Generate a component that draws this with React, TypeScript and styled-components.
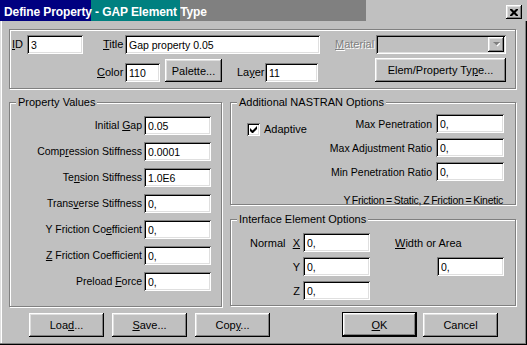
import React from 'react';
import styled, { createGlobalStyle, css } from 'styled-components';

const FONT = '"Liberation Sans", Arial, sans-serif';

const Global = createGlobalStyle`
  html, body { margin: 0; padding: 0; background: #c0c0c0; }
  body { font-family: ${FONT}; font-size: 10.5px; color: #000; }
  * { box-sizing: border-box; }
`;

const raised = css`
  box-shadow: inset -1px -1px 0 #000, inset 1px 1px 0 #fff, inset -2px -2px 0 #808080, inset 2px 2px 0 #dfdfdf;
`;
const sunken = css`
  box-shadow: inset 1px 1px 0 #808080, inset -1px -1px 0 #fff, inset 2px 2px 0 #000, inset -2px -2px 0 #dfdfdf;
`;

const Window = styled.div`
  width: 527px;
  height: 345px;
  background: #c0c0c0;
  display: flex;
  flex-direction: column;
  overflow: hidden;
  box-shadow: inset -1px -1px 0 #000, inset -2px -2px 0 #808080, inset 1px 0 0 #dfdfdf, inset 2px 0 0 #fff;
`;

const TitleBar = styled.div`
  height: 21px;
  flex: none;
  display: flex;
  align-items: flex-start;
  justify-content: space-between;
  background: linear-gradient(to right, #000080 0 91px, #008080 91px 180px, #808080 180px 366px, #c0c0c0 366px);
`;

const TitleText = styled.span`
  margin: 5px 0 0 4px;
  font-weight: bold;
  color: #fff;
  font-size: 12px;
  line-height: 14px;
  letter-spacing: -0.1px;
  white-space: nowrap;
`;

const CloseButton = styled.button`
  width: 16px;
  height: 14px;
  margin: 5px 5px 0 0;
  padding: 0;
  border: none;
  background: #c0c0c0;
  display: flex;
  align-items: center;
  justify-content: center;
  ${raised}
`;

const Body = styled.div`
  flex: 1;
  display: flex;
  flex-direction: column;
  padding: 8px 11px 0 9px;
`;

const Group = styled.div<{ $h: number; $mt?: number }>`
  position: relative;
  height: ${p => p.$h}px;
  margin-top: ${p => p.$mt ?? 0}px;
  border: 1px solid #808080;
  box-shadow: inset 1px 1px 0 #fff, 1px 1px 0 #fff;
`;

const Legend = styled.span`
  position: absolute;
  top: -7px;
  left: 6px;
  padding: 0 2px;
  background: #c0c0c0;
  font-size: 11px;
  line-height: 13px;
  white-space: nowrap;
`;

const TopGroup = styled(Group)`
  padding-top: 5px;
`;

const TopRow = styled.div<{ $h: number; $mt?: number }>`
  display: flex;
  align-items: flex-end;
  height: ${p => p.$h}px;
  margin-top: ${p => p.$mt ?? 0}px;
`;

const TopLabel = styled.label<{ $w: number; $ml: number; $disabled?: boolean }>`
  flex: none;
  width: ${p => p.$w}px;
  margin-left: ${p => p.$ml}px;
  height: 19px;
  line-height: 19px;
  font-size: 11px;
  white-space: nowrap;
  ${p => p.$disabled && css`
    color: #808080;
    text-shadow: 1px 1px 0 #fff;
  `}
`;

const TextField = styled.input<{ $w: number }>`
  flex: none;
  width: ${p => p.$w}px;
  height: 19px;
  margin: 0;
  padding: 0 2px 0 4px;
  border: none;
  outline: none;
  background: #fff;
  font: 10.5px ${FONT};
  color: #000;
  ${sunken}
`;

const Combo = styled.div<{ $w: number }>`
  flex: none;
  width: ${p => p.$w}px;
  height: 19px;
  padding: 2px;
  display: flex;
  justify-content: flex-end;
  background: #c0c0c0;
  ${sunken}
`;

const ComboArrow = styled.span`
  width: 16px;
  height: 15px;
  display: flex;
  align-items: center;
  justify-content: center;
  background: #c0c0c0;
  ${raised}
`;

const Button = styled.button<{ $w: number; $h?: number; $ml?: number; $default?: boolean }>`
  flex: none;
  width: ${p => p.$w}px;
  height: ${p => p.$h ?? 24}px;
  margin: 0 0 0 ${p => p.$ml ?? 0}px;
  padding: 0;
  border: none;
  background: #c0c0c0;
  font: 11px ${FONT};
  color: #000;
  white-space: nowrap;
  ${raised}
  ${p => p.$default && css`
    box-shadow: inset 0 0 0 1px #000, inset -2px -2px 0 #000, inset 2px 2px 0 #fff,
      inset -3px -3px 0 #808080, inset 3px 3px 0 #dfdfdf;
  `}
`;

const K = styled.span`
  text-decoration: underline;
`;

const Middle = styled.div`
  display: grid;
  grid-template-columns: 213px 1fr;
  column-gap: 8px;
  margin-top: 13px;
  align-items: start;
`;

const RightColumn = styled.div`
  display: flex;
  flex-direction: column;
`;

const FieldList = styled.div`
  display: flex;
  flex-direction: column;
  gap: 7px;
  padding-top: 13px;
`;

const FieldRow = styled.div`
  display: flex;
  align-items: center;
  height: 19px;
`;

const FieldLabel = styled.label<{ $w: number }>`
  flex: none;
  width: ${p => p.$w}px;
  padding-right: 2px;
  text-align: right;
  white-space: nowrap;
  line-height: 19px;
`;

const NastranBody = styled.div`
  display: flex;
  height: 100%;
`;

const CheckColumn = styled.div`
  padding: 20px 0 0 16px;
`;

const CheckLabel = styled.label`
  display: flex;
  align-items: center;
  gap: 4px;
  line-height: 13px;
  font-size: 11px;
`;

const CheckBox = styled.span`
  width: 13px;
  height: 13px;
  display: flex;
  align-items: center;
  justify-content: center;
  background: #fff;
  ${sunken}
`;

const NastranFields = styled.div`
  flex: 1;
  display: flex;
  flex-direction: column;
  gap: 5px;
  padding: 11px 11px 0 0;
`;

const NastranRow = styled.div`
  display: flex;
  justify-content: flex-end;
  align-items: center;
  height: 19px;
`;

const NastranLabel = styled.label`
  padding-right: 4px;
  white-space: nowrap;
`;

const Footnote = styled.div`
  margin-top: 8px;
  padding-right: 1px;
  text-align: right;
  line-height: 13px;
  letter-spacing: -0.25px;
  word-spacing: -0.8px;
  white-space: nowrap;
`;

const InterfaceGrid = styled.div`
  display: grid;
  grid-template-columns: 36px 17px 67px 25px 109px;
  grid-auto-rows: 19px;
  row-gap: 5px;
  padding: 13px 0 0 19px;
  align-items: center;
`;

const GridText = styled.span<{ $col: number; $row: number; $right?: boolean }>`
  grid-column: ${p => p.$col};
  grid-row: ${p => p.$row};
  text-align: ${p => (p.$right ? 'right' : 'left')};
  padding-right: ${p => (p.$right ? 3 : 0)}px;
  font-size: 11px;
  white-space: nowrap;
`;

const GridField = styled(TextField)<{ $col: number; $row: number; $end?: boolean }>`
  grid-column: ${p => p.$col};
  grid-row: ${p => p.$row};
  justify-self: ${p => (p.$end ? 'end' : 'start')};
`;

const ButtonRow = styled.div`
  display: flex;
  justify-content: space-between;
  align-items: flex-end;
  margin-top: 5px;
  height: 25px;
  padding: 0 18px 0 20px;
`;

const ButtonGroup = styled.div<{ $gap: number }>`
  display: flex;
  align-items: flex-end;
  gap: ${p => p.$gap}px;
`;

const propertyFields: { label: React.ReactNode; value: string }[] = [
  { label: <>Initial <K>G</K>ap</>, value: '0.05' },
  { label: <>Comp<K>r</K>ession Stiffness</>, value: '0.0001' },
  { label: <>Te<K>n</K>sion Stiffness</>, value: '1.0E6' },
  { label: <>Trans<K>v</K>erse Stiffness</>, value: '0,' },
  { label: <>Y Friction Co<K>e</K>fficient</>, value: '0,' },
  { label: <><K>Z</K> Friction Coefficient</>, value: '0,' },
  { label: <>Preload <K>F</K>orce</>, value: '0,' },
];

const nastranFields = [
  { label: 'Max Penetration', value: '0,' },
  { label: 'Max Adjustment Ratio', value: '0,' },
  { label: 'Min Penetration Ratio', value: '0,' },
];

export default function App() {
  return (
    <>
      <Global />
      <Window>
        <TitleBar>
          <TitleText>Define Property - GAP Element Type</TitleText>
          <CloseButton aria-label="Close">
            <svg width="8" height="7" viewBox="0 0 8 7">
              <path d="M0 0h2l2 2 2-2h2v1L5.5 3.5 8 6v1H6L4 5 2 7H0V6l2.5-2.5L0 1z" fill="#000" />
            </svg>
          </CloseButton>
        </TitleBar>
        <Body>
          <TopGroup $h={60}>
            <TopRow $h={19}>
              <TopLabel $w={15} $ml={2}><K>I</K>D</TopLabel>
              <TextField $w={56} value="3" readOnly />
              <TopLabel $w={22} $ml={20}><K>T</K>itle</TopLabel>
              <TextField $w={195} value="Gap property 0.05" readOnly />
              <TopLabel $w={41} $ml={15} $disabled><K>M</K>aterial</TopLabel>
              <Combo $w={130}>
                <ComboArrow>
                  <svg width="7" height="5" viewBox="0 0 7 5">
                    <path d="M1 1h7L4.5 4.5z" fill="#fff" />
                    <path d="M0 0h7L3.5 3.5z" fill="#808080" />
                  </svg>
                </ComboArrow>
              </Combo>
            </TopRow>
            <TopRow $h={25} $mt={3}>
              <TopLabel $w={28} $ml={87}><K>C</K>olor</TopLabel>
              <TextField $w={35} value="110" readOnly />
              <Button $w={57} $h={23} $ml={5}>Palette...</Button>
              <TopLabel $w={28} $ml={15}>La<K>y</K>er</TopLabel>
              <TextField $w={53} value="11" readOnly />
              <Button $w={131} $h={24} $ml={57}>Elem/Property Ty<K>p</K>e...</Button>
            </TopRow>
          </TopGroup>

          <Middle>
            <Group $h={205}>
              <Legend>Property Values</Legend>
              <FieldList>
                {propertyFields.map((f, i) => (
                  <FieldRow key={i}>
                    <FieldLabel $w={134}>{f.label}</FieldLabel>
                    <TextField $w={67} value={f.value} readOnly />
                  </FieldRow>
                ))}
              </FieldList>
            </Group>

            <RightColumn>
              <Group $h={103}>
                <Legend>Additional NASTRAN Options</Legend>
                <NastranBody>
                  <CheckColumn>
                    <CheckLabel>
                      <CheckBox>
                        <svg width="7" height="7" viewBox="0 0 7 7">
                          <path d="M0 2v3l2 2h1l4-4V0L2.5 4.5z" fill="#000" />
                        </svg>
                      </CheckBox>
                      Adaptive
                    </CheckLabel>
                  </CheckColumn>
                  <NastranFields>
                    {nastranFields.map(f => (
                      <NastranRow key={f.label}>
                        <NastranLabel>{f.label}</NastranLabel>
                        <TextField $w={68} value={f.value} readOnly />
                      </NastranRow>
                    ))}
                    <Footnote>Y Friction = Static, Z Friction = Kinetic</Footnote>
                  </NastranFields>
                </NastranBody>
              </Group>

              <Group $h={87} $mt={14}>
                <Legend>Interface Element Options</Legend>
                <InterfaceGrid>
                  <GridText $col={1} $row={1}>Normal</GridText>
                  <GridText $col={2} $row={1} $right><K>X</K></GridText>
                  <GridField $col={3} $row={1} $w={67} value="0," readOnly />
                  <GridText $col={2} $row={2} $right>Y</GridText>
                  <GridField $col={3} $row={2} $w={67} value="0," readOnly />
                  <GridText $col={2} $row={3} $right>Z</GridText>
                  <GridField $col={3} $row={3} $w={67} value="0," readOnly />
                  <GridText $col={5} $row={1}><K>W</K>idth or Area</GridText>
                  <GridField $col={5} $row={2} $w={67} $end value="0," readOnly />
                </InterfaceGrid>
              </Group>
            </RightColumn>
          </Middle>

          <ButtonRow>
            <ButtonGroup $gap={8}>
              <Button $w={75}>Loa<K>d</K>...</Button>
              <Button $w={75}><K>S</K>ave...</Button>
              <Button $w={75}>Cop<K>y</K>...</Button>
            </ButtonGroup>
            <ButtonGroup $gap={6}>
              <Button $w={75} $h={25} $default><K>O</K>K</Button>
              <Button $w={75}>Cancel</Button>
            </ButtonGroup>
          </ButtonRow>
        </Body>
      </Window>
    </>
  );
}
